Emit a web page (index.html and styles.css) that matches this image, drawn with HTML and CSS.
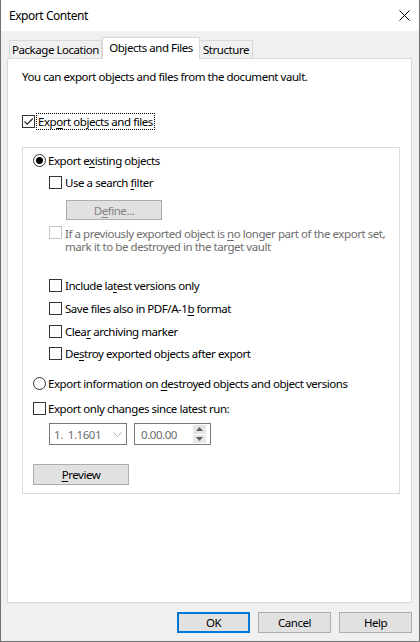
FILE: index.html
```html
<!DOCTYPE html>
<html>
<head>
<meta charset="utf-8">
<title>Export Content</title>
<link rel="stylesheet" href="styles.css">
</head>
<body>
<div class="window">
  <div class="titlebar">
    <span class="title">Export Content</span>
    <svg class="close" width="11" height="11" viewBox="0 0 11 11"><path d="M0.5 0.5L10.5 10.5M10.5 0.5L0.5 10.5" stroke="#000" stroke-width="1" fill="none"/></svg>
  </div>
  <div class="client">
    <div class="tabs">
      <div class="tab tab-pkg">Package Location</div>
      <div class="tab tab-obj active">Objects and Files</div>
      <div class="tab tab-str">Structure</div>
    </div>
    <div class="panel">
      <p class="desc">You can export objects and files from the document vault.</p>
      <div class="row top-check">
        <span class="box"><svg width="11" height="11" viewBox="0 0 11 11"><path d="M1.5 5.5L4.2 8.2L9.8 2.5" stroke="#222" stroke-width="1.1" fill="none"/></svg></span>
        <span class="label focus">Exp<u>o</u>rt objects and files</span>
      </div>
      <div class="group">
        <div class="row r-existing">
          <span class="radio on"></span>
          <span class="label">Export e<u>x</u>isting objects</span>
        </div>
        <div class="row sub r-filter">
          <span class="box"></span>
          <span class="label">Use a search <u>f</u>ilter</span>
        </div>
        <div class="btn define">D<u>e</u>fine...</div>
        <div class="row sub multi r-destroyprev">
          <span class="box disabled"></span>
          <span class="label dim">If a previously exported object is <u>n</u>o longer part of the export set,<br>mark it to be destroyed in the target vault</span>
        </div>
        <div class="row sub r-latest">
          <span class="box"></span>
          <span class="label">Include la<u>t</u>est versions only</span>
        </div>
        <div class="row sub r-pdf">
          <span class="box"></span>
          <span class="label">Save files also in PDF/A-1<u>b</u> format</span>
        </div>
        <div class="row sub r-clear">
          <span class="box"></span>
          <span class="label">Clea<u>r</u> archiving marker</span>
        </div>
        <div class="row sub r-destroy">
          <span class="box"></span>
          <span class="label">De<u>s</u>troy exported objects after export</span>
        </div>
        <div class="row r-info">
          <span class="radio"></span>
          <span class="label">Export information on <u>d</u>estroyed objects and object versions</span>
        </div>
        <div class="row r-changes">
          <span class="box"></span>
          <span class="label">Export only changes since latest run:</span>
        </div>
        <div class="fields">
          <div class="combo">
            <span class="ftext">1.&nbsp; 1.1601</span>
            <svg class="chev" width="9" height="5" viewBox="0 0 9 5"><path d="M0.5 0.5L4.5 4.5L8.5 0.5" stroke="#b4b4b4" stroke-width="1" fill="none"/></svg>
          </div>
          <div class="timefield">
            <span class="ftext">0.00.00</span>
            <div class="spin">
              <div class="spin-btn"><svg width="7" height="4" viewBox="0 0 7 4"><path d="M0 4L3.5 0L7 4Z" fill="#606060"/></svg></div>
              <div class="spin-btn"><svg width="7" height="4" viewBox="0 0 7 4"><path d="M0 0L3.5 4L7 0Z" fill="#606060"/></svg></div>
            </div>
          </div>
        </div>
        <div class="btn preview"><u>P</u>review</div>
      </div>
    </div>
    <div class="footer">
      <div class="btn dlg default">OK</div>
      <div class="btn dlg">Cancel</div>
      <div class="btn dlg">Help</div>
    </div>
  </div>
</div>
</body>
</html>
```
FILE: styles.css
```css
* { box-sizing: border-box; }
html, body { margin: 0; padding: 0; }
body {
  width: 420px;
  height: 642px;
  overflow: hidden;
  font-family: "Noto Sans", "Open Sans", sans-serif;
  font-size: 11.5px;
  letter-spacing: -0.45px;
  color: #000;
  background: #f0f0f0;
}
u { text-decoration: underline; text-underline-offset: 2px; text-decoration-thickness: 1px; }

.window {
  width: 420px;
  height: 642px;
  border: 1px solid #707070;
  border-top: 0;
  display: flex;
  flex-direction: column;
  background: #f0f0f0;
}
.titlebar {
  flex: none;
  height: 31px;
  background: #fff;
  display: flex;
  align-items: center;
  justify-content: space-between;
  padding: 0 9px 0 8px;
}
.title { line-height: 16px; font-size: 12px; letter-spacing: -0.45px; }
.close { display: block; }

.client {
  flex: 1;
  display: flex;
  flex-direction: column;
  padding: 6px 7px 0 6px;
}
.tabs {
  flex: none;
  height: 21px;
  display: flex;
  align-items: flex-end;
  padding-left: 2px;
}
.tab {
  height: 18px;
  border: 1px solid #d9d9d9;
  border-bottom: 0;
  background: #f0f0f0;
  display: flex;
  align-items: center;
  justify-content: center;
  line-height: 15px;
  white-space: nowrap;
}
.tab-pkg { width: 93px; }
.tab-obj { width: 98px; }
.tab-str { width: 54px; margin-left: -1px; }
.tab.active {
  height: 22px;
  margin-bottom: -1px;
  background: #fff;
  position: relative;
  z-index: 1;
  padding-bottom: 3px;
}

.panel {
  flex: 1;
  background: #fff;
  border: 1px solid #d9d9d9;
  padding: 10px 11px 0 14px;
  display: flex;
  flex-direction: column;
  align-items: flex-start;
}
.desc { margin: 0; line-height: 15px; white-space: nowrap; }

.row {
  display: flex;
  align-items: center;
  height: 16px;
  white-space: nowrap;
}
.label { line-height: 15px; }
.box {
  flex: none;
  width: 13px;
  height: 13px;
  border: 1px solid #333;
  background: #fff;
  margin-right: 2px;
  display: flex;
}
.box svg { display: block; }
.box.disabled { border-color: #c4c4c4; }
.radio {
  flex: none;
  width: 13px;
  height: 13px;
  border: 1px solid #333;
  border-radius: 50%;
  background: #fff;
  margin-right: 2px;
  display: flex;
  align-items: center;
  justify-content: center;
}
.radio.on::after {
  content: "";
  width: 7px;
  height: 7px;
  border-radius: 50%;
  background: #000;
}
.focus { outline: 1px dotted #000; outline-offset: 0; padding: 0 1px; }
.dim { color: #6d6d6d; }

.top-check { margin-top: 29px; height: 17px; }

.group {
  align-self: stretch;
  margin-top: 17px;
  height: 347px;
  border: 1px solid #dcdcdc;
  padding: 4px 0 0 10px;
  display: flex;
  flex-direction: column;
  align-items: flex-start;
}
.sub { margin-left: 16px; }
.sub .box { margin-right: 3px; }
.r-filter { margin-top: 6px; }
.define {
  margin-top: 10px;
  margin-left: 33px;
  width: 96px;
  height: 20px;
  background: #cccccc;
  border: 1px solid #bfbfbf;
  color: #838383;
}
.multi { height: auto; align-items: flex-start; margin-top: 6px; }
.multi .label { line-height: 13px; padding-top: 1px; }
.r-latest { margin-top: 24px; }
.r-pdf { margin-top: 7px; }
.r-clear { margin-top: 7px; }
.r-destroy { margin-top: 6px; }
.r-info { margin-top: 14px; }
.r-changes { margin-top: 9px; }

.fields {
  margin-top: 7px;
  margin-left: 16px;
  display: flex;
  gap: 7px;
}
.combo, .timefield {
  height: 22px;
  border: 1px solid #7a7a7a;
  background: #fff;
  display: flex;
  align-items: center;
  color: #6d6d6d;
}
.combo { width: 78px; padding-left: 4px; justify-content: space-between; padding-right: 4px; }
.timefield { width: 77px; padding-left: 6px; padding-right: 4px; justify-content: space-between; }
.chev { display: block; }
.spin {
  width: 13px;
  height: 18px;
  display: flex;
  flex-direction: column;
  gap: 1px;
}
.spin-btn {
  flex: 1;
  background: #e6e6e6;
  display: flex;
  align-items: center;
  justify-content: center;
}
.spin-btn svg { display: block; }

.btn {
  display: flex;
  align-items: center;
  justify-content: center;
  background: #e1e1e1;
  border: 1px solid #adadad;
  line-height: 15px;
  white-space: nowrap;
}
.preview { margin-top: 19px; width: 96px; height: 21px; }

.footer {
  flex: none;
  height: 38px;
  padding-top: 9px;
  display: flex;
  justify-content: flex-end;
  align-items: flex-start;
  gap: 8px;
}
.dlg { width: 73px; height: 21px; }
.dlg.default { border: 2px solid #0078d7; }
```
